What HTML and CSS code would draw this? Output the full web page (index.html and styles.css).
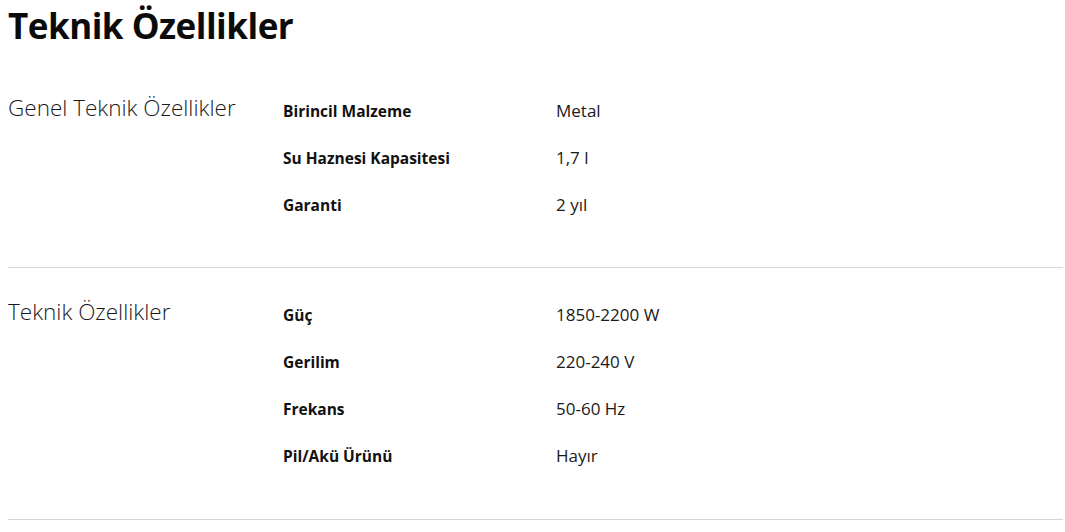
FILE: index.html
```
<!DOCTYPE html>
<html lang="tr">
<head>
<meta charset="utf-8">
<link rel="stylesheet" href="styles.css">
</head>
<body>
<div class="page">
  <h1 class="title">Teknik Özellikler</h1>
  <section class="spec-group first">
    <h2 class="group-name">Genel Teknik Özellikler</h2>
    <dl class="rows">
      <div class="row"><dt>Birincil Malzeme</dt><dd>Metal</dd></div>
      <div class="row"><dt>Su Haznesi Kapasitesi</dt><dd>1,7 l</dd></div>
      <div class="row"><dt>Garanti</dt><dd>2 yıl</dd></div>
    </dl>
  </section>
  <section class="spec-group">
    <h2 class="group-name">Teknik Özellikler</h2>
    <dl class="rows">
      <div class="row"><dt>Güç</dt><dd>1850-2200 W</dd></div>
      <div class="row"><dt>Gerilim</dt><dd>220-240 V</dd></div>
      <div class="row"><dt>Frekans</dt><dd>50-60 Hz</dd></div>
      <div class="row"><dt>Pil/Akü Ürünü</dt><dd>Hayır</dd></div>
    </dl>
  </section>
</div>
</body>
</html>
```
FILE: styles.css
```
html, body {
  margin: 0;
  padding: 0;
  background: #fff;
}
body {
  font-family: "Open Sans", "Noto Sans", sans-serif;
  color: #111;
}
.page {
  padding: 0 2px 0 8px;
}
.title {
  margin: 0;
  padding-top: 1px;
  font-size: 35px;
  font-weight: 700;
  line-height: 50px;
  letter-spacing: -0.5px;
  color: #0b0b0b;
}
.spec-group {
  display: flex;
  border-bottom: 1px solid #d6d6d6;
  padding: 23px 0 40px;
}
.spec-group.first {
  padding-top: 36px;
  padding-bottom: 39px;
}
.group-name {
  margin: 0;
  width: 275px;
  flex: none;
  font-size: 22.5px;
  font-weight: 300;
  line-height: 41px;
  color: #1a1a1a;
}
.rows {
  margin: 0;
  flex: 1;
}
.row {
  display: flex;
  height: 47px;
  align-items: center;
}
.row dt {
  width: 273px;
  flex: none;
  font-size: 15.5px;
  font-weight: 700;
  color: #111;
}
.row dd {
  margin: 0;
  font-size: 17px;
  color: #1a1a1a;
}
```
